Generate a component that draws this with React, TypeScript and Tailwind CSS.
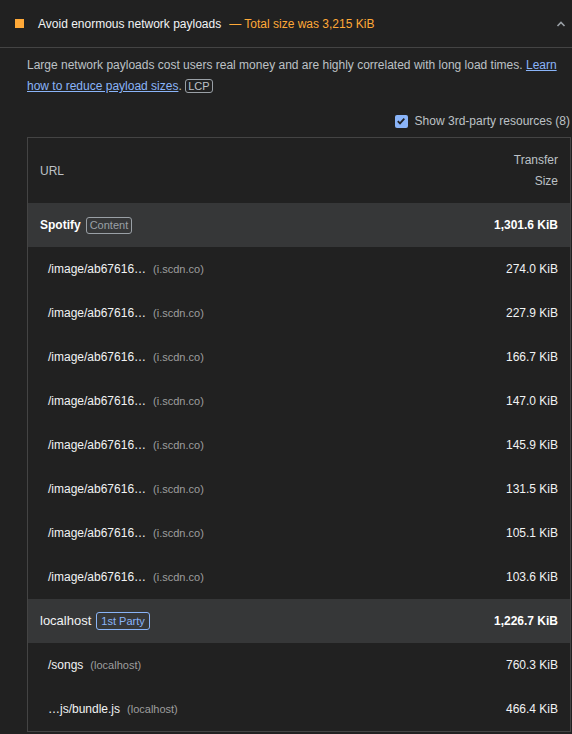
const spotifyRows = [
  "274.0 KiB",
  "227.9 KiB",
  "166.7 KiB",
  "147.0 KiB",
  "145.9 KiB",
  "131.5 KiB",
  "105.1 KiB",
  "103.6 KiB",
];

function GroupRow({ name, badge, size, firstParty }: { name: string; badge: string; size: string; firstParty?: boolean }) {
  return (
    <div className="flex h-[44px] items-center justify-between bg-[#363738] pl-[12px] pr-[12px]">
      <div className="flex items-center gap-[5px]">
        <span className={firstParty ? "text-[13px] text-[#f1f3f4]" : "font-bold text-white"}>{name}</span>
        <span
          className={
            firstParty
              ? "rounded-[3px] border border-[#8ab4f8] px-[4px] text-[11px] leading-[16px] text-[#8ab4f8]"
              : "rounded-[3px] border border-[#9aa0a6] px-[3px] text-[11px] leading-[15px] text-[#9aa0a6]"
          }
        >
          {badge}
        </span>
      </div>
      <span className="font-bold text-white">{size}</span>
    </div>
  );
}

function SubRow({ url, host, size }: { url: string; host: string; size: string }) {
  return (
    <div className="flex h-[44px] items-center justify-between pl-[20px] pr-[12px]">
      <div className="flex items-baseline gap-[7px]">
        <span className="text-[#f1f3f4]">{url}</span>
        <span className="text-[11px] text-[#9e9e9e]">{host}</span>
      </div>
      <span className="text-[#f1f3f4]">{size}</span>
    </div>
  );
}

export default function App() {
  return (
    <div className="h-[734px] w-[572px] overflow-hidden bg-[#212121] font-['Liberation_Sans',Arial,sans-serif] text-[12px] text-[#e8eaed]">
      <div className="flex h-[48px] items-center border-b border-[#444] pl-[15px] pr-[5px]">
        <span className="h-[9px] w-[9px] bg-[#ffa938]" />
        <span className="ml-[14px] text-[#f1f3f4]">Avoid enormous network payloads</span>
        <span className="ml-[8px] text-[#ffa938]">— Total size was 3,215 KiB</span>
        <svg className="ml-auto" width="12" height="12" viewBox="0 0 12 12" fill="none">
          <path d="M2.5 8 L6 4.5 L9.5 8" stroke="#9aa0a6" strokeWidth="1.6" />
        </svg>
      </div>
      <div className="pl-[27px] pr-[12px] pt-[7px]">
        <p className="leading-[21px] text-[#bdc1c6]">
          Large network payloads cost users real money and are highly correlated with long load times.{" "}
          <a className="text-[#8ab4f8] underline">Learn how to reduce payload sizes</a>.{" "}
          <span className="rounded-[3px] border border-[#9aa0a6] px-[2px] text-[11px] leading-[14px] text-[#bdc1c6]">LCP</span>
        </p>
      </div>
      <div className="mt-[15px] flex items-center justify-end gap-[7px] pr-[2px]">
        <span className="flex h-[13px] w-[13px] items-center justify-center rounded-[2px] bg-[#8ab4f8]">
          <svg width="10" height="10" viewBox="0 0 10 10" fill="none">
            <path d="M1.8 5.2 L4 7.4 L8.3 2.6" stroke="#202124" strokeWidth="1.8" />
          </svg>
        </span>
        <span className="text-[#bdc1c6]">Show 3rd-party resources (8)</span>
      </div>
      <div className="ml-[27px] mt-[7px] w-[544px] border border-[#444]">
        <div className="flex h-[65px] items-center justify-between pl-[12px] pr-[12px] text-[#bdc1c6]">
          <span>URL</span>
          <span className="text-right leading-[21px]">
            Transfer
            <br />
            Size
          </span>
        </div>
        <GroupRow name="Spotify" badge="Content" size="1,301.6 KiB" />
        {spotifyRows.map((s, i) => (
          <SubRow key={i} url="/image/ab67616…" host="(i.scdn.co)" size={s} />
        ))}
        <GroupRow name="localhost" badge="1st Party" size="1,226.7 KiB" firstParty />
        <SubRow url="/songs" host="(localhost)" size="760.3 KiB" />
        <SubRow url="…js/bundle.js" host="(localhost)" size="466.4 KiB" />
      </div>
    </div>
  );
}
